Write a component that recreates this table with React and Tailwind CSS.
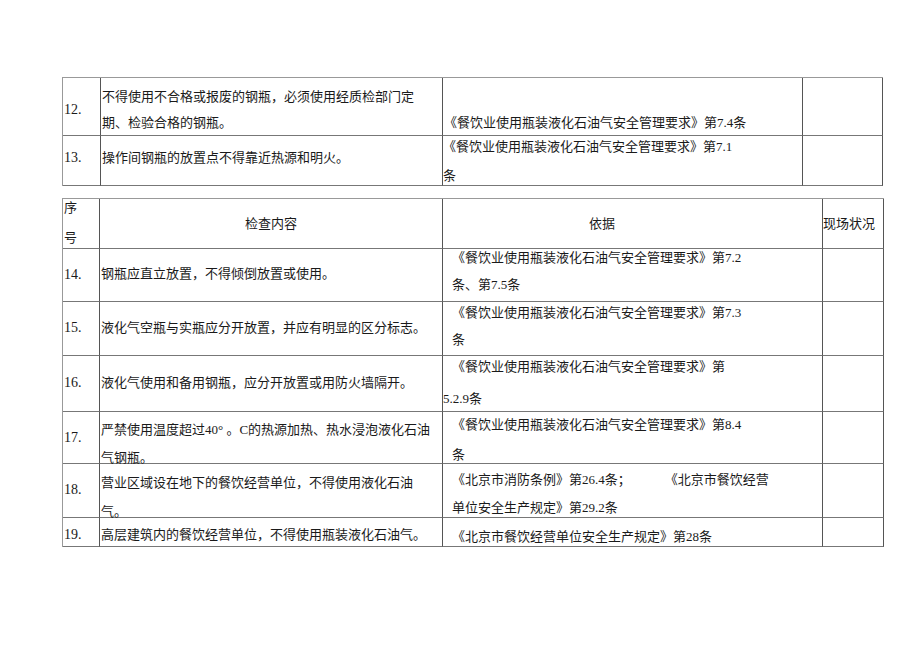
import React from 'react';

const Cell = ({ w, pad = '', children }) => (
  <div className={`shrink-0 border-r border-b border-r-[#555] border-b-[#777] ${w} ${pad}`}>
    {children}
  </div>
);

const Lines = ({ gap, items }) => (
  <div className={`flex flex-col ${gap}`}>
    {items.map((t, i) => (
      <div key={i} className="whitespace-nowrap">{t}</div>
    ))}
  </div>
);

const Row = ({ h, children }) => <div className={`flex ${h}`}>{children}</div>;

const Num = ({ w, pad, children }) => (
  <Cell w={w} pad={`${pad} pl-[1px] text-[14px]`}>{children}</Cell>
);

export default function App() {
  return (
    <div className="w-[920px] h-[651px] bg-white pt-[77px] pl-[62px] text-[13px] leading-[16px] text-[#1a1a1a] font-['Liberation_Serif','Noto_Sans_CJK_SC',serif]">
      {/* 上半表 */}
      <div className="flex flex-col w-fit border-l border-t border-[#999]">
        <Row h="h-[58px]">
          <Num w="w-[38px]" pad="pt-[24px]">12.</Num>
          <Cell w="w-[342px]" pad="pt-[11px] pl-[1px]">
            <Lines gap="gap-[10px]" items={['不得使用不合格或报废的钢瓶，必须使用经质检部门定', '期、检验合格的钢瓶。']} />
          </Cell>
          <Cell w="w-[360px]" pad="pt-[37px] pl-[1px]">《餐饮业使用瓶装液化石油气安全管理要求》第7.4条</Cell>
          <Cell w="w-[80px]" />
        </Row>
        <Row h="h-[50px]">
          <Num w="w-[38px]" pad="pt-[14px]">13.</Num>
          <Cell w="w-[342px]" pad="pt-[14px] pl-[1px]">操作间钢瓶的放置点不得靠近热源和明火。</Cell>
          <Cell w="w-[360px]" pad="pt-[3px]">
            <Lines gap="gap-[13px]" items={['《餐饮业使用瓶装液化石油气安全管理要求》第7.1', '条']} />
          </Cell>
          <Cell w="w-[80px]" />
        </Row>
      </div>

      {/* 下半表 */}
      <div className="mt-[12px] flex flex-col w-fit border-l border-t border-[#999]">
        <Row h="h-[50px]">
          <Cell w="w-[37px]" pad="pt-[1px] pl-[1px]">
            <Lines gap="gap-[14px]" items={['序', '号']} />
          </Cell>
          <Cell w="w-[343px]" pad="pt-[17px] text-center">检查内容</Cell>
          <Cell w="w-[380px]" pad="pt-[17px] pl-[146px]">依据</Cell>
          <Cell w="w-[61px]" pad="pt-[17px]">现场状况</Cell>
        </Row>
        <Row h="h-[53px]">
          <Num w="w-[37px]" pad="pt-[18px]">14.</Num>
          <Cell w="w-[343px]" pad="pt-[17px] pl-[1px]">钢瓶应直立放置，不得倾倒放置或使用。</Cell>
          <Cell w="w-[380px]" pad="pt-[1px] pl-[9px]">
            <Lines gap="gap-[11px]" items={['《餐饮业使用瓶装液化石油气安全管理要求》第7.2', '条、第7.5条']} />
          </Cell>
          <Cell w="w-[61px]" />
        </Row>
        <Row h="h-[54px]">
          <Num w="w-[37px]" pad="pt-[18px]">15.</Num>
          <Cell w="w-[343px]" pad="pt-[18px] pl-[1px]">液化气空瓶与实瓶应分开放置，并应有明显的区分标志。</Cell>
          <Cell w="w-[380px]" pad="pt-[3px] pl-[9px]">
            <Lines gap="gap-[11px]" items={['《餐饮业使用瓶装液化石油气安全管理要求》第7.3', '条']} />
          </Cell>
          <Cell w="w-[61px]" />
        </Row>
        <Row h="h-[56px]">
          <Num w="w-[37px]" pad="pt-[19px]">16.</Num>
          <Cell w="w-[343px]" pad="pt-[19px] pl-[1px]">液化气使用和备用钢瓶，应分开放置或用防火墙隔开。</Cell>
          <Cell w="w-[380px]" pad="pt-[3px]">
            <div className="flex flex-col gap-[16px]">
              <div className="whitespace-nowrap pl-[9px]">《餐饮业使用瓶装液化石油气安全管理要求》第</div>
              <div className="whitespace-nowrap">5.2.9条</div>
            </div>
          </Cell>
          <Cell w="w-[61px]" />
        </Row>
        <Row h="h-[52px]">
          <Num w="w-[37px]" pad="pt-[18px]">17.</Num>
          <Cell w="w-[343px]" pad="pt-[10px] pl-[1px]">
            <Lines gap="gap-[12px]" items={['严禁使用温度超过40° 。C的热源加热、热水浸泡液化石油', '气钢瓶。']} />
          </Cell>
          <Cell w="w-[380px]" pad="pt-[5px] pl-[9px]">
            <Lines gap="gap-[14px]" items={['《餐饮业使用瓶装液化石油气安全管理要求》第8.4', '条']} />
          </Cell>
          <Cell w="w-[61px]" />
        </Row>
        <Row h="h-[54px]">
          <Num w="w-[37px]" pad="pt-[18px]">18.</Num>
          <Cell w="w-[343px]" pad="pt-[11px] pl-[1px]">
            <Lines gap="gap-[13px]" items={['营业区域设在地下的餐饮经营单位，不得使用液化石油', '气。']} />
          </Cell>
          <Cell w="w-[380px]" pad="pt-[8px] pl-[9px]">
            <div className="flex flex-col gap-[12px]">
              <div className="whitespace-nowrap">
                《北京市消防条例》第26.4条；<span className="inline-block w-[34px]" />《北京市餐饮经营
              </div>
              <div className="whitespace-nowrap">单位安全生产规定》第29.2条</div>
            </div>
          </Cell>
          <Cell w="w-[61px]" />
        </Row>
        <Row h="h-[29px]">
          <Num w="w-[37px]" pad="pt-[9px]">19.</Num>
          <Cell w="w-[343px]" pad="pt-[9px] pl-[1px]">高层建筑内的餐饮经营单位，不得使用瓶装液化石油气。</Cell>
          <Cell w="w-[380px]" pad="pt-[11px] pl-[9px]">《北京市餐饮经营单位安全生产规定》第28条</Cell>
          <Cell w="w-[61px]" />
        </Row>
      </div>
    </div>
  );
}
